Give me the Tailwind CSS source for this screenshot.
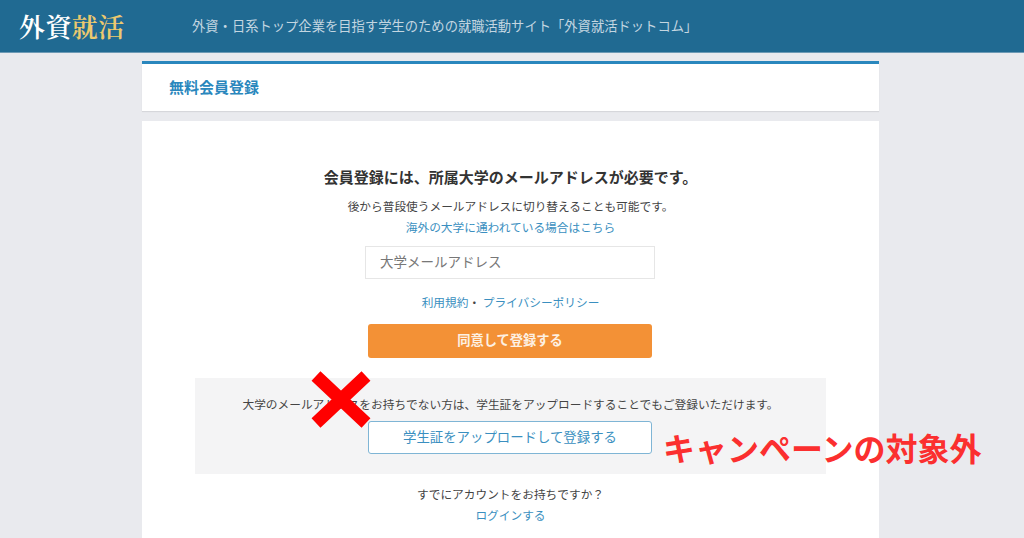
<!DOCTYPE html>
<html lang="ja"><head><meta charset="utf-8">
<script src="https://cdn.jsdelivr.net/npm/@tailwindcss/browser@4"></script>
</head>
<body class="bg-[#e9eaee] font-['Noto_Sans_CJK_JP','Noto_Sans',sans-serif] text-[#444]">
<div class="relative h-[538px] w-[1024px] overflow-hidden">
  <header class="flex h-[53px] items-center border-b border-[#6d9ab5] bg-[#206a92] pl-[19px]">
    <div class="w-[173px] font-['Noto_Serif_CJK_JP','Noto_Sans_CJK_JP',serif] text-[26px] leading-none font-semibold tracking-[0.4px] text-white">外資<span class="text-[#ecc96e]">就活</span></div>
    <p class="text-[13.3px] text-[#c3d6e1]">外資・日系トップ企業を目指す学生のための就職活動サイト「外資就活ドットコム」</p>
  </header>
  <main class="mt-2 ml-[142px] w-[737px]">
    <div class="flex h-[50px] items-center border-t-[3px] border-[#2a87bd] bg-white pl-[27px] shadow-[0_1px_1px_rgba(0,0,0,0.08)]">
      <h1 class="text-[15px] font-bold text-[#2a87bd]">無料会員登録</h1>
    </div>
    <section class="mt-[10px] flex h-[420px] flex-col items-center bg-white pt-[44px]">
      <h2 class="text-[15px] leading-[24px] font-bold text-[#333]">会員登録には、所属大学のメールアドレスが必要です。</h2>
      <p class="mt-[8px] text-[11.7px] leading-[17px] text-[#444]">後から普段使うメールアドレスに切り替えることも可能です。</p>
      <a class="mt-[4px] text-[11.7px] leading-[17px] text-[#3a8fc0]">海外の大学に通われている場合はこちら</a>
      <div class="mt-[11px] mr-px flex h-[33px] w-[290px] items-center border border-[#e6e6e6] pb-[2px] pl-[14px] text-[13.5px] text-[#777]">大学メールアドレス</div>
      <p class="mt-[14px] text-[11.7px] leading-[17px] text-[#444]"><a class="text-[#3a8fc0]">利用規約</a>・ <a class="text-[#3a8fc0]">プライバシーポリシー</a></p>
      <button class="mt-[14px] mr-px flex h-[34px] w-[284px] items-center justify-center rounded-[3px] bg-[#f39136] pb-[2px] text-[13.25px] font-bold text-[#fdf0e2]">同意して登録する</button>
      <div class="mt-[20px] mr-px flex h-[96px] w-[631px] flex-col items-center bg-[#f4f4f5] pt-[17px]">
        <p class="ml-px text-[11.7px] leading-[17px] text-[#444]">大学のメールアドレスをお持ちでない方は、学生証をアップロードすることでもご登録いただけます。</p>
        <button class="mt-[9px] flex h-[33px] w-[284px] items-center justify-center rounded-[3px] border-[1.5px] border-[#7fb5d5] bg-white pb-[2px] text-[13.4px] text-[#3a8fc0]">学生証をアップロードして登録する</button>
      </div>
      <p class="mt-[11px] text-[11.7px] leading-[17px] text-[#444]">すでにアカウントをお持ちですか？</p>
      <a class="mt-[4px] text-[11.7px] leading-[17px] text-[#3a8fc0]">ログインする</a>
    </section>
  </main>
  <svg class="absolute top-[371px] left-[311px] h-[57px] w-[60px]" viewBox="0 0 60 57"><path d="M5 5 L55 52 M55 5 L5 52" stroke="#f00" stroke-width="13" fill="none"/></svg>
  <div class="absolute top-[423px] left-[663px] text-[32px] leading-[48px] font-bold whitespace-nowrap text-[#fb2f2f]">キャンペーンの対象外</div>
</div>
</body></html>
